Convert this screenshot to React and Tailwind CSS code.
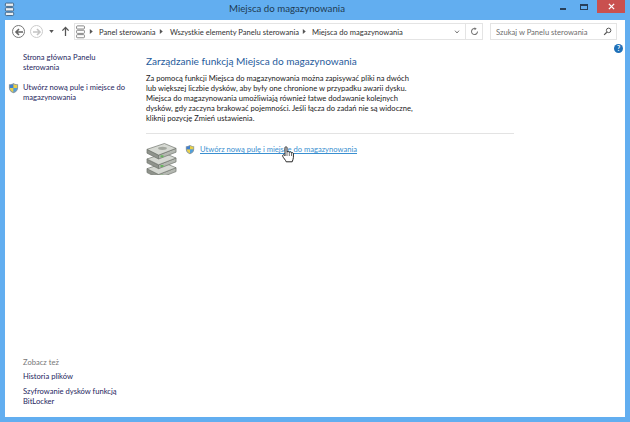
const Shield = ({ className }) => (
  <svg viewBox="0 0 12 12" className={className}>
    <path d="M6 .5 C7.5 1.6 9.5 2 11 2 V6 C11 9 8.5 10.8 6 11.6 C3.5 10.8 1 9 1 6 V2 C2.5 2 4.5 1.6 6 .5Z" fill="#8a9aa5" />
    <path d="M6 1.5 V6 H2 V2.8 C3.5 2.7 5 2.2 6 1.5Z" fill="#3f7fd0" />
    <path d="M6 1.5 C7 2.2 8.5 2.7 10 2.8 V6 H6Z" fill="#e8d04a" />
    <path d="M2 6 H6 V10.5 C4 9.8 2.2 8.4 2 6Z" fill="#e8d04a" />
    <path d="M6 6 H10 C9.8 8.4 8 9.8 6 10.5Z" fill="#4f9fdc" />
  </svg>
);

const StackIcon = () => (
  <svg viewBox="0 0 32 33" className="w-[31px] h-[33px] shrink-0">
    {[20, 10, 0].map((y) => (
      <g key={y} stroke="#6f746c" strokeWidth="0.7" strokeLinejoin="round">
        <path d={`M1 ${y + 7} V${y + 11} L13 ${y + 17} V${y + 13}Z`} fill="#8f938c" />
        <path d={`M13 ${y + 13} V${y + 17} L31 ${y + 10} V${y + 6}Z`} fill="#b4b8b1" />
        <path d={`M1 ${y + 7} L19 ${y + 1} L31 ${y + 6} L13 ${y + 13}Z`} fill="#d6d9d3" />
        <rect x="15" y={y + 13.2} width="3" height="2" fill="#67b55e" stroke="none" />
      </g>
    ))}
    <ellipse cx="17" cy="6" rx="4.5" ry="1.6" fill="#a3a79f" />
  </svg>
);

const SmallStack = ({ className, color = "#6d7680", fill = "#fff" }) => (
  <svg viewBox="0 0 12 16" className={className}>
    {[1, 6, 11].map((y) => (
      <rect key={y} x="1.5" y={y} width="9" height="3.6" rx="1" fill={fill} stroke={color} strokeWidth="1" />
    ))}
  </svg>
);

const Chevron = () => (
  <svg viewBox="0 0 6 8" className="w-[5px] h-[7px] shrink-0">
    <path d="M1 1 L4.5 4 L1 7Z" fill="#555" />
  </svg>
);

const Arrow = ({ dir, color }) => (
  <svg viewBox="0 0 10 10" className="w-[10px] h-[10px]">
    <path
      d={dir === "left" ? "M9 5H2M5 2 L2 5 L5 8" : "M1 5H8M5 2 L8 5 L5 8"}
      fill="none"
      stroke={color}
      strokeWidth="1.6"
    />
  </svg>
);

const Hand = () => (
  <svg viewBox="0 0 12 17" className="w-[12px] h-[17px]">
    <path
      d="M3 1.6 C3 .5 5 .5 5 1.6 V6 C5.5 5.4 7 5.4 7.3 6.2 C7.9 5.6 9.2 5.8 9.5 6.7 C10.2 6.3 11.4 6.6 11.4 7.8 V11.5 C11.4 13.2 10.6 14 10.2 15.8 H4.2 C3.8 14.2 1.2 11.8 .7 10.2 C.3 8.9 1.6 8.3 2.4 9 L3 9.7Z"
      fill="#fff"
      stroke="#111"
      strokeWidth="0.9"
    />
    <path d="M5 6V10M7.3 6.2V10M9.5 6.7V10" stroke="#111" strokeWidth="0.6" />
  </svg>
);

export default function App() {
  return (
    <div
      className="w-[630px] h-[422px] bg-[#62aef0] flex flex-col overflow-hidden text-[7.6px] leading-[10px] whitespace-nowrap"
      style={{ fontFamily: 'Lato, "Open Sans", sans-serif' }}
    >
      {/* title bar */}
      <div className="h-[20px] shrink-0 flex items-start">
        <SmallStack className="w-[11px] h-[15px] ml-[4px] mt-[2px]" color="#3c5f80" fill="#e8eef2" />
        <div className="ml-[214px] mt-[1px] text-[9.7px] leading-[14px] text-[#1d3a52]">
          Miejsca do magazynowania
        </div>
        <div className="ml-auto flex items-start mr-[5px]">
          <div className="w-[18px] h-[13px] flex items-center justify-center">
            <div className="w-[6px] h-[2px] bg-[#27405a] mt-[5px]" />
          </div>
          <div className="w-[24px] h-[13px] flex items-center justify-center">
            <div className="w-[8px] h-[6px] border border-t-2 border-[#27405a]" />
          </div>
          <div className="w-[28px] h-[13px] ml-[1px] bg-[#c9504f] flex items-center justify-center">
            <svg viewBox="0 0 8 8" className="w-[7px] h-[7px]">
              <path d="M1 1 L7 7M7 1 L1 7" stroke="#fff" strokeWidth="1.5" />
            </svg>
          </div>
        </div>
      </div>

      {/* window body */}
      <div className="flex-1 mx-[5px] mb-[5px] bg-white flex flex-col min-h-0">
        {/* nav bar */}
        <div className="h-[22px] shrink-0 flex items-center pt-[1px] pl-[7px] pr-[8px]">
          <div className="w-[13px] h-[13px] rounded-full border border-[#777] flex items-center justify-center">
            <Arrow dir="left" color="#666" />
          </div>
          <div className="w-[13px] h-[13px] rounded-full border border-[#ccc] flex items-center justify-center ml-[5px]">
            <Arrow dir="right" color="#c4c4c4" />
          </div>
          <svg viewBox="0 0 6 4" className="w-[5px] h-[3px] ml-[6px]">
            <path d="M0 0 H6 L3 4Z" fill="#555" />
          </svg>
          <svg viewBox="0 0 10 12" className="w-[9px] h-[11px] ml-[7px]">
            <path d="M5 11V2M1.5 5 L5 1.5 L8.5 5" fill="none" stroke="#555" strokeWidth="1.4" />
          </svg>
          <div className="ml-[4px] w-[409px] h-[17px] border border-[#e4e4e4] flex items-center text-[#333]">
            <SmallStack className="w-[11px] h-[14px]" color="#777" />
            <div className="ml-[3px]"><Chevron /></div>
            <span className="ml-[5px] w-[60px]">Panel sterowania</span>
            <div><Chevron /></div>
            <span className="ml-[6px] w-[132px]">Wszystkie elementy Panelu sterowania</span>
            <div><Chevron /></div>
            <span className="ml-[5px]">Miejsca do magazynowania</span>
            <svg viewBox="0 0 8 6" className="w-[6px] h-[4px] ml-auto mr-[5px]">
              <path d="M1 1 L4 4.5 L7 1" fill="none" stroke="#666" strokeWidth="1.3" />
            </svg>
            <div className="w-[17px] self-stretch border-l border-[#e4e4e4] flex items-center justify-center">
              <svg viewBox="0 0 12 12" className="w-[9px] h-[9px]">
                <path d="M10 6 A4 4 0 1 1 7.5 2.3" fill="none" stroke="#777" strokeWidth="1.4" />
                <path d="M6 .3 L9 2.4 L6 4.4Z" fill="#777" />
              </svg>
            </div>
          </div>
          <div className="ml-[7px] flex-1 h-[17px] border border-[#e4e4e4] flex items-center pl-[5px] pr-[4px] text-[#6d6d6d]">
            <span>Szukaj w Panelu sterowania</span>
            <svg viewBox="0 0 12 12" className="w-[9px] h-[9px] ml-auto">
              <circle cx="7.5" cy="4.5" r="3" fill="none" stroke="#555" strokeWidth="1.3" />
              <path d="M5 7 L1.5 10.5" stroke="#555" strokeWidth="1.6" />
            </svg>
          </div>
        </div>

        {/* main */}
        <div className="flex-1 flex min-h-0 relative">
          {/* sidebar */}
          <div className="w-[141px] shrink-0 pl-[18px] flex flex-col text-[#26265e] pt-[10px] pb-[11px]">
            <div>Strona główna Panelu<br />sterowania</div>
            <div className="flex mt-[10px] -ml-[15px]">
              <Shield className="w-[11px] h-[12px] shrink-0" />
              <div className="ml-[4px]">Utwórz nową pulę i miejsce do<br />magazynowania</div>
            </div>
            <div className="mt-auto text-[#777]">Zobacz też</div>
            <div className="mt-[4px]">Historia plików</div>
            <div className="mt-[5px]">Szyfrowanie dysków funkcją<br />BitLocker</div>
          </div>

          {/* content */}
          <div className="flex-1 pt-[12px] flex flex-col">
            <div className="text-[10.1px] leading-[14px] text-[#1f5b9c]">Zarządzanie funkcją Miejsca do magazynowania</div>
            <p className="mt-[5px] text-[#222] leading-[10px]">
              Za pomocą funkcji Miejsca do magazynowania można zapisywać pliki na dwóch<br />
              lub większej liczbie dysków, aby były one chronione w przypadku awarii dysku.<br />
              Miejsca do magazynowania umożliwiają również łatwe dodawanie kolejnych<br />
              dysków, gdy zaczyna brakować pojemności. Jeśli łącza do zadań nie są widoczne,<br />
              kliknij pozycję Zmień ustawienia.
            </p>
            <div className="mt-[10px] w-[368px] h-px bg-[#e3e3e3]" />
            <div className="flex mt-[8px] relative">
              <StackIcon />
              <Shield className="w-[10px] h-[11px] shrink-0 ml-[8px] mt-[2px]" />
              <a className="ml-[5px] mt-[2px] text-[#3a8fd0] underline">Utwórz nową pulę i miejsce do magazynowania</a>
              <div className="absolute left-[136px] top-[4px]"><Hand /></div>
            </div>
          </div>

          {/* help */}
          <div className="absolute right-[2px] top-[2px] w-[9px] h-[9px] rounded-full bg-[#1f70b8] text-white text-[7px] leading-[9px] font-bold text-center">?</div>
        </div>
      </div>
    </div>
  );
}
